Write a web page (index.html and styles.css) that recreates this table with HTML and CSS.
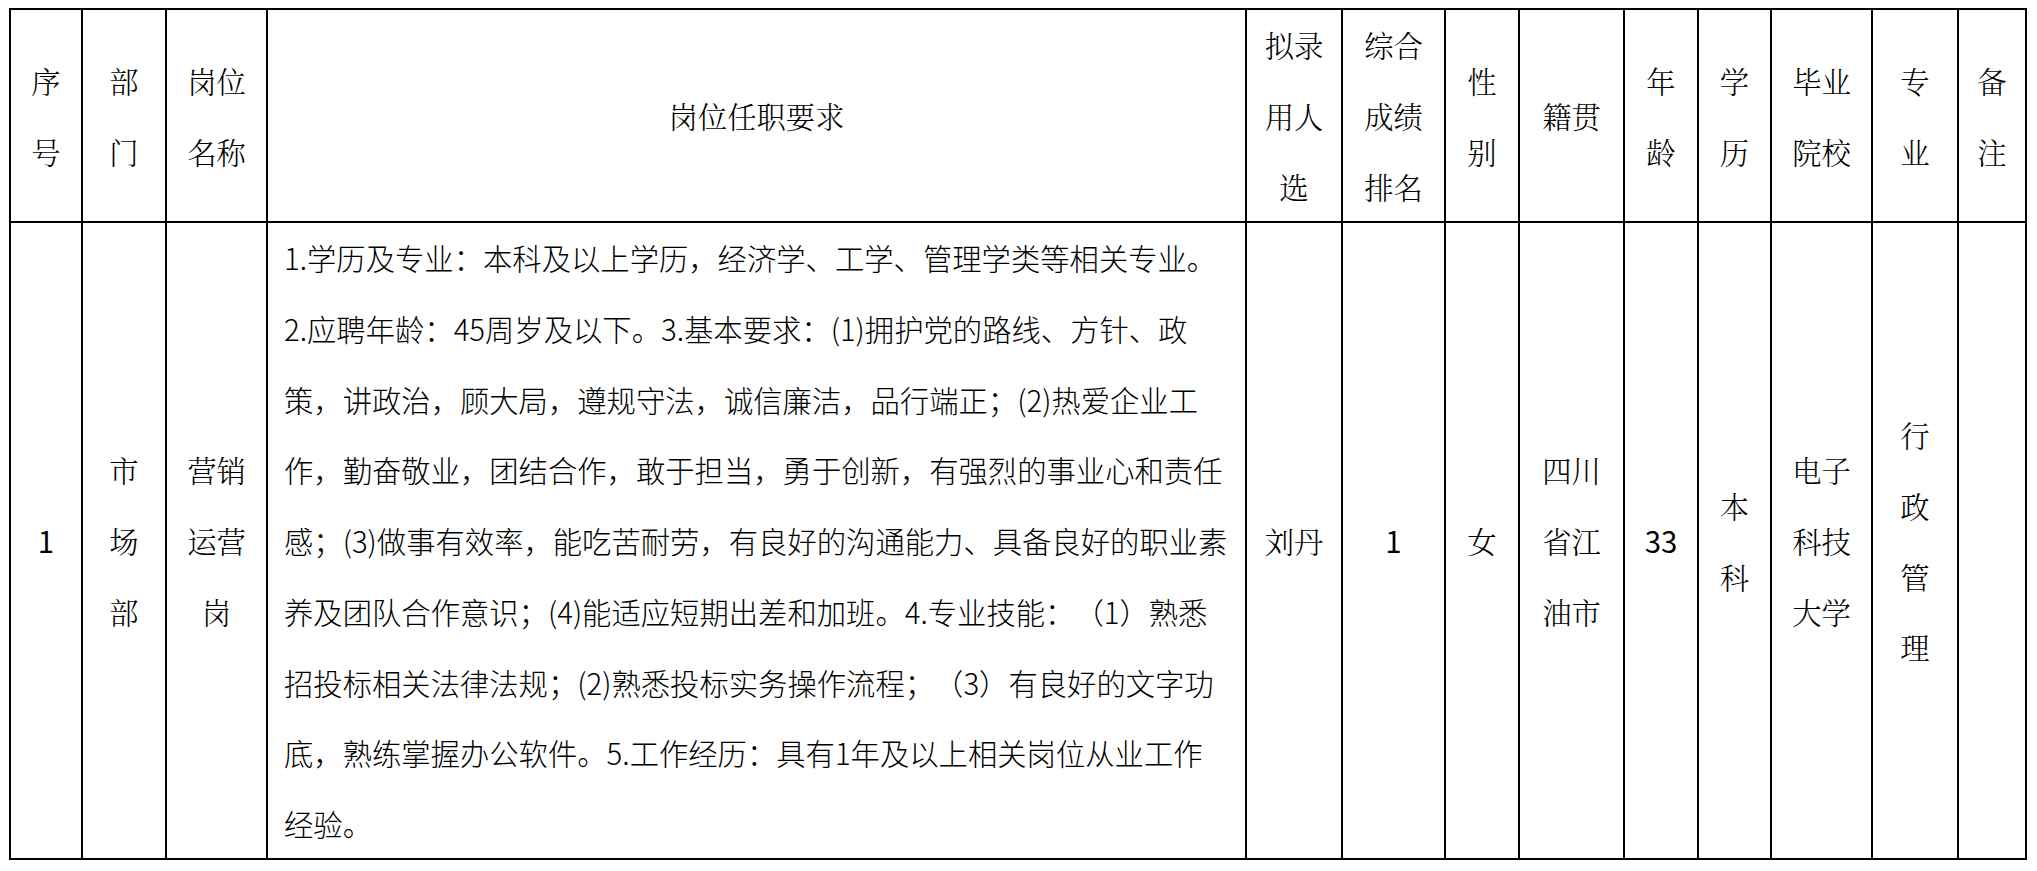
FILE: index.html
```html
<!DOCTYPE html>
<html lang="zh-CN">
<head>
<meta charset="utf-8">
<title>拟录用人选</title>
<link rel="stylesheet" href="styles.css">
</head>
<body>
<div class="sheet">
  <div class="cell">序<br>号</div>
  <div class="cell">部<br>门</div>
  <div class="cell">岗位<br>名称</div>
  <div class="cell">岗位任职要求</div>
  <div class="cell">拟录<br>用人<br>选</div>
  <div class="cell">综合<br>成绩<br>排名</div>
  <div class="cell">性<br>别</div>
  <div class="cell">籍贯</div>
  <div class="cell">年<br>龄</div>
  <div class="cell">学<br>历</div>
  <div class="cell">毕业<br>院校</div>
  <div class="cell">专<br>业</div>
  <div class="cell">备<br>注</div>

  <div class="cell num">1</div>
  <div class="cell">市<br>场<br>部</div>
  <div class="cell">营销<br>运营<br>岗</div>
  <div class="cell req">1.学历及专业：本科及以上学历，经济学、工学、管理学类等相关专业。<br>2.应聘年龄：45周岁及以下。3.基本要求：(1)拥护党的路线、方针、政<br>策，讲政治，顾大局，遵规守法，诚信廉洁，品行端正；(2)热爱企业工<br>作，勤奋敬业，团结合作，敢于担当，勇于创新，有强烈的事业心和责任<br>感；(3)做事有效率，能吃苦耐劳，有良好的沟通能力、具备良好的职业素<br>养及团队合作意识；(4)能适应短期出差和加班。4.专业技能：（1）熟悉<br>招投标相关法律法规；(2)熟悉投标实务操作流程；（3）有良好的文字功<br>底，熟练掌握办公软件。5.工作经历：具有1年及以上相关岗位从业工作<br>经验。</div>
  <div class="cell">刘丹</div>
  <div class="cell num">1</div>
  <div class="cell">女</div>
  <div class="cell">四川<br>省江<br>油市</div>
  <div class="cell num">33</div>
  <div class="cell">本<br>科</div>
  <div class="cell">电子<br>科技<br>大学</div>
  <div class="cell">行<br>政<br>管<br>理</div>
  <div class="cell"></div>
</div>
</body>
</html>
```

FILE: styles.css
```css
* {
  box-sizing: border-box;
}

html,
body {
  margin: 0;
  background: #ffffff;
}

.sheet {
  display: grid;
  grid-template-columns: 72px 84px 101px 979px 96px 103px 74px 105px 74px 73px 101px 86px 68px;
  grid-template-rows: 213px 637px;
  width: max-content;
  margin: 8px 0 0 9px;
  border-top: 2px solid #000;
  border-left: 2px solid #000;
  color: #000;
  font-size: 29.33px;
  line-height: 70.7px;
  font-weight: 300;
  text-spacing-trim: space-all;
}

.cell {
  display: flex;
  align-items: center;
  justify-content: center;
  text-align: center;
  white-space: nowrap;
  border-right: 2px solid #000;
  border-bottom: 2px solid #000;
  font-family: "Noto Serif CJK SC", "Noto Sans CJK SC", serif;
}

.num {
  font-family: "Noto Sans CJK SC", sans-serif;
  font-weight: 400;
}

.req {
  justify-content: flex-start;
  text-align: left;
  padding-left: 16px;
  font-family: "Noto Sans CJK SC", sans-serif;
  text-spacing-trim: space-all;
}
```
